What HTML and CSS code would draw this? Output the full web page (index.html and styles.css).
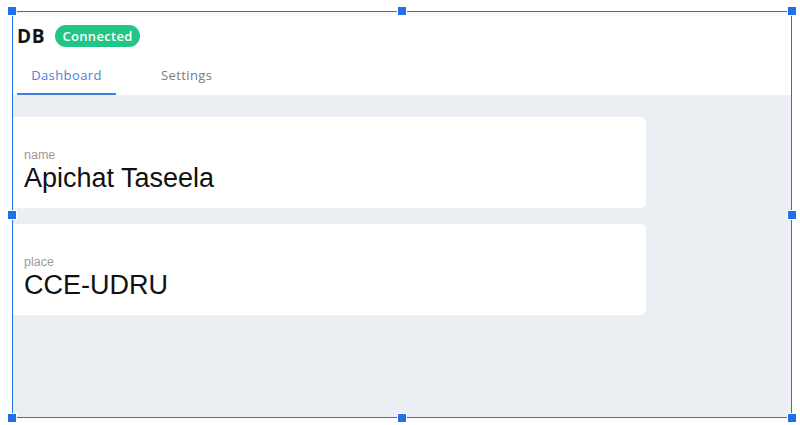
FILE: index.html
```html
<!DOCTYPE html>
<html>
<head>
<meta charset="utf-8">
<link rel="stylesheet" href="styles.css">
</head>
<body>
<div class="stage">
  <div class="frame">
    <div class="page">
      <header class="header">
        <div class="brand-row">
          <span class="brand">DB</span>
          <span class="badge">Connected</span>
        </div>
        <nav class="tabs">
          <span class="tab active">Dashboard</span>
          <span class="tab">Settings</span>
        </nav>
      </header>
      <main class="main">
        <div class="card">
          <div class="label">name</div>
          <div class="value">Apichat Taseela</div>
        </div>
        <div class="card">
          <div class="label">place</div>
          <div class="value">CCE-UDRU</div>
        </div>
      </main>
    </div>
    <span class="handle h-tl"></span>
    <span class="handle h-tm"></span>
    <span class="handle h-tr"></span>
    <span class="handle h-ml"></span>
    <span class="handle h-mr"></span>
    <span class="handle h-bl"></span>
    <span class="handle h-bm"></span>
    <span class="handle h-br"></span>
  </div>
</div>
</body>
</html>
```
FILE: styles.css
```css
* { box-sizing: border-box; }
html, body { margin: 0; padding: 0; background: #fff; }
body { width: 800px; height: 425px; overflow: hidden; }

.stage {
  padding: 11px 8px 7px 12px;
  height: 425px;
}

.frame {
  position: relative;
  height: 100%;
  border: 1px solid #2274e6;
}

.page {
  height: 100%;
  overflow: hidden;
  background: #ebeef2;
  display: flex;
  flex-direction: column;
}

.header {
  background: #fff;
  height: 83px;
  padding: 13px 0 0 4px;
  box-shadow: inset 0 3px 3px -2px rgba(0,0,0,0.06);
  font-family: "Open Sans", "DejaVu Sans", sans-serif;
}

.brand-row {
  display: flex;
  align-items: center;
  gap: 10px;
  height: 22px;
}

.brand {
  font-weight: 700;
  font-size: 19px;
  color: #111;
  letter-spacing: 0.6px;
  line-height: 22px;
}

.badge {
  display: inline-flex;
  align-items: center;
  justify-content: center;
  width: 85px;
  height: 22px;
  border-radius: 11px;
  background: #22c585;
  color: #fff;
  font-size: 13px;
  font-weight: 600;
  letter-spacing: 0.3px;
}

.tabs {
  display: flex;
  gap: 30px;
  margin-top: 12px;
}

.tab {
  padding: 1px 15px 3px;
  line-height: 30px;
  font-size: 13px;
  color: #7a7a7a;
  border-bottom: 2px solid transparent;
  letter-spacing: 0.4px;
}

.tab.active {
  color: #4d7fd6;
  border-bottom-color: #3f7fe0;
  width: 99px;
  text-align: center;
  padding-left: 0;
  padding-right: 0;
}

.main {
  flex: 1;
  padding-top: 22px;
  display: flex;
  flex-direction: column;
  gap: 16px;
  font-family: "Liberation Sans", Arial, sans-serif;
}

.card {
  width: 633px;
  height: 91px;
  background: #fff;
  border-radius: 0 5px 5px 0;
  padding: 31px 0 0 11px;
}

.label {
  font-size: 12.5px;
  line-height: 14px;
  color: #9a9a9a;
  margin-bottom: 2px;
}

.value {
  font-size: 27px;
  line-height: 28px;
  color: #111;
}

.handle {
  position: absolute;
  width: 10px;
  height: 10px;
  background: #1f72e6;
  border: 1px solid #fff;
}
.h-tl { left: -6px; top: -6px; }
.h-tm { left: calc(50% - 5px); top: -6px; }
.h-tr { right: -6px; top: -6px; }
.h-ml { left: -6px; top: calc(50% - 5px); }
.h-mr { right: -6px; top: calc(50% - 5px); }
.h-bl { left: -6px; bottom: -6px; }
.h-bm { left: calc(50% - 5px); bottom: -6px; }
.h-br { right: -6px; bottom: -6px; }
```
